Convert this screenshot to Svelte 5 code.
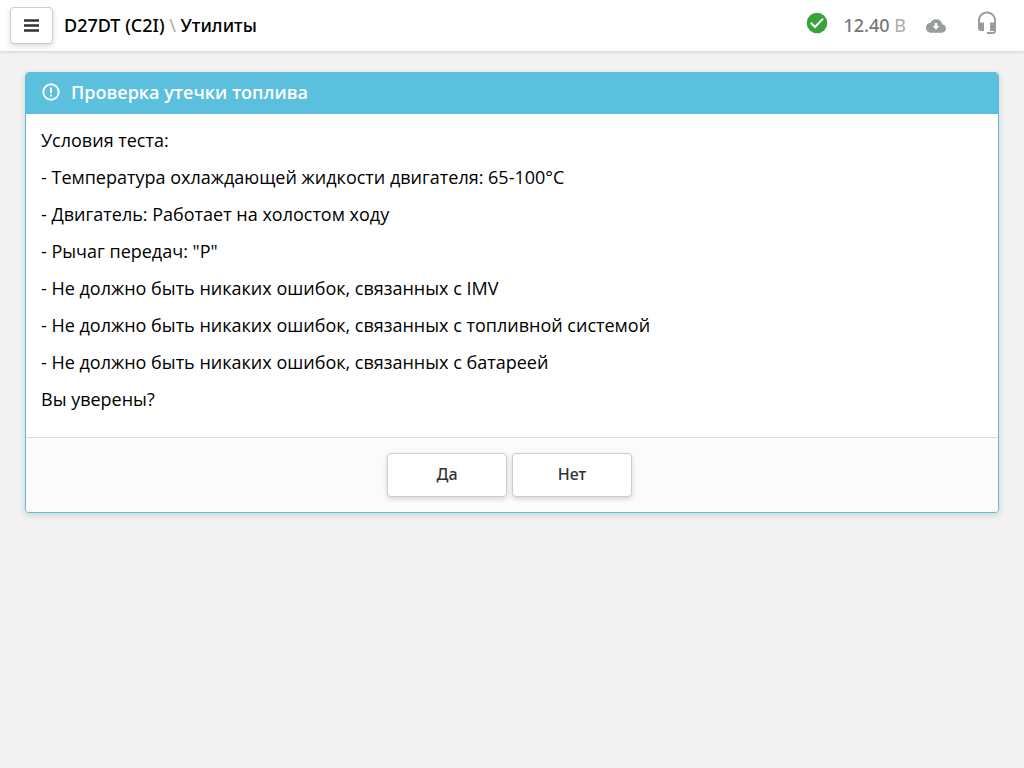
<script>
  // Vehicle info shown in the top bar
  const vehicle = "D27DT (C2I)";
  const section = "Утилиты";
  const voltage = "12.40";

  // Conditions that must be met before the test is started
  const title = "Проверка утечки топлива";
  const lines = [
    "Условия теста:",
    "- Температура охлаждающей жидкости двигателя: 65-100°C",
    "- Двигатель: Работает на холостом ходу",
    '- Рычаг передач: "P"',
    "- Не должно быть никаких ошибок, связанных с IMV",
    "- Не должно быть никаких ошибок, связанных с топливной системой",
    "- Не должно быть никаких ошибок, связанных с батареей",
    "Вы уверены?",
  ];

  let answer = $state(null);
</script>

<header class="topbar">
  <button class="btn menu" aria-label="Меню">
    <svg width="15" height="13" viewBox="0 0 15 13">
      <path d="M0 1.500h15M0 6.500h15M0 11.500h15" stroke="#333" stroke-width="2.4" />
    </svg>
  </button>
  <h1>{vehicle} <span class="slash">\</span> {section}</h1>

  <div class="status">
    <svg class="ok" width="22" height="22" viewBox="0 0 22 22">
      <circle cx="11" cy="11" r="10.3" fill="#38a338" />
      <path d="M4.8 10.8l4.200 4.200 8-8.400" fill="none" stroke="#fff" stroke-width="2" />
    </svg>
    <span class="voltage"><b>{voltage}</b> В</span>
    <svg class="cloud" width="20" height="14" viewBox="0 0 24 16">
      <path fill="#999c9c" d="M19.35 6.04A7.49 7.49 0 0 0 12 0C9.11 0 6.6 1.64 5.35 4.04A5.994 5.994 0 0 0 0 10c0 3.31 2.69 6 6 6h13c2.76 0 5-2.24 5-5 0-2.64-2.05-4.78-4.65-4.96z" />
      <path fill="#fff" d="M10.5 4.5h3V8H16l-4 4.500L8 8h2.500z" />
    </svg>
    <svg class="headset" width="20" height="24" viewBox="0 0 20 24">
      <path fill="#999c9c" d="M10 .5C4.9.5 1 4.5 1 9.500v7.500c0 1.700 1.300 3 3 3h3v-8.500H3v-2c0-3.900 3.100-7 7-7s7 3.100 7 7v2h-4V20h4v1h-7v2h6c1.700 0 3-1.300 3-3V9.500c0-5-3.900-9-9-9z" />
    </svg>
  </div>
</header>

<main>
  <section class="panel">
    <div class="panel-heading">
      <svg width="18" height="18" viewBox="0 0 18 18">
        <circle cx="9" cy="9" r="7.700" fill="none" stroke="#fff" stroke-width="1.9" />
        <path d="M9 4.500v5.500M9 11.500v2" stroke="#fff" stroke-width="2" />
      </svg>
      <h2>{title}</h2>
    </div>
    <div class="panel-body">
      {#each lines as line}
        <p>{line}</p>
      {/each}
    </div>
    <div class="panel-footer">
      <button class="btn" onclick={() => (answer = true)}>Да</button>
      <button class="btn" onclick={() => (answer = false)}>Нет</button>
    </div>
  </section>
</main>

<style>
  :global(body) {
    background: #f2f2f2;
    color: #000;
    font-family: "Open Sans", sans-serif;
    font-size: 18px;
    line-height: 26px;
  }

  .topbar {
    display: flex;
    align-items: center;
    box-sizing: border-box;
    height: 51px;
    padding: 0 27px 0 10px;
    background: #fff;
    box-shadow: 0 1px 3px rgba(0, 0, 0, 0.15);
    font-family: "Noto Sans", sans-serif;
  }

  h1 {
    margin: 0 0 2px 11px;
    font-size: 18px;
    font-weight: 500;
  }

  .slash {
    color: #aaa;
    font-weight: 400;
  }

  .btn {
    box-sizing: border-box;
    width: 120px;
    height: 44px;
    padding: 0 0 2px;
    border: 1px solid #ccc;
    border-radius: 4px;
    background: #fff;
    box-shadow: 0 2px 5px rgba(0, 0, 0, 0.15);
    color: #333;
    font-family: "Noto Sans", sans-serif;
    font-size: 16px;
    font-weight: 500;
    cursor: pointer;
  }

  .btn:hover {
    background: #f5f5f5;
  }

  .menu {
    display: flex;
    align-items: center;
    justify-content: center;
    width: 43px;
    height: 37px;
    padding: 0;
  }

  /* Connection state, battery voltage and service icons */
  .status {
    display: flex;
    align-items: center;
    margin-left: auto;
    color: #aaa;
  }

  .ok {
    margin: 0 16px 6px 0;
  }

  .voltage {
    margin-bottom: 2px;
  }

  .voltage b {
    color: #777;
    font-weight: 500;
  }

  .cloud {
    margin: 0 31px 0 20px;
  }

  .headset {
    margin-bottom: 6px;
  }

  main {
    padding: 21px 25px;
  }

  .panel {
    overflow: hidden;
    border: 1px solid #5bc0de;
    border-radius: 4px;
    background: #fff;
    box-shadow: 0 2px 6px rgba(0, 0, 0, 0.15);
  }

  .panel-heading {
    display: flex;
    align-items: center;
    gap: 11px;
    box-sizing: border-box;
    height: 41px;
    padding: 0 16px 3px;
    background: #5bc0de;
    color: #fff;
  }

  h2 {
    margin: 0;
    font-size: 18px;
    font-weight: 600;
  }

  .panel-body {
    padding: 13px 15px 14px;
  }

  p {
    margin: 0 0 11px;
  }

  .panel-footer {
    display: flex;
    justify-content: center;
    gap: 5px;
    padding: 15px 20px 15px 15px;
    border-top: 1px solid #ddd;
    background: #fbfbfb;
  }
</style>
